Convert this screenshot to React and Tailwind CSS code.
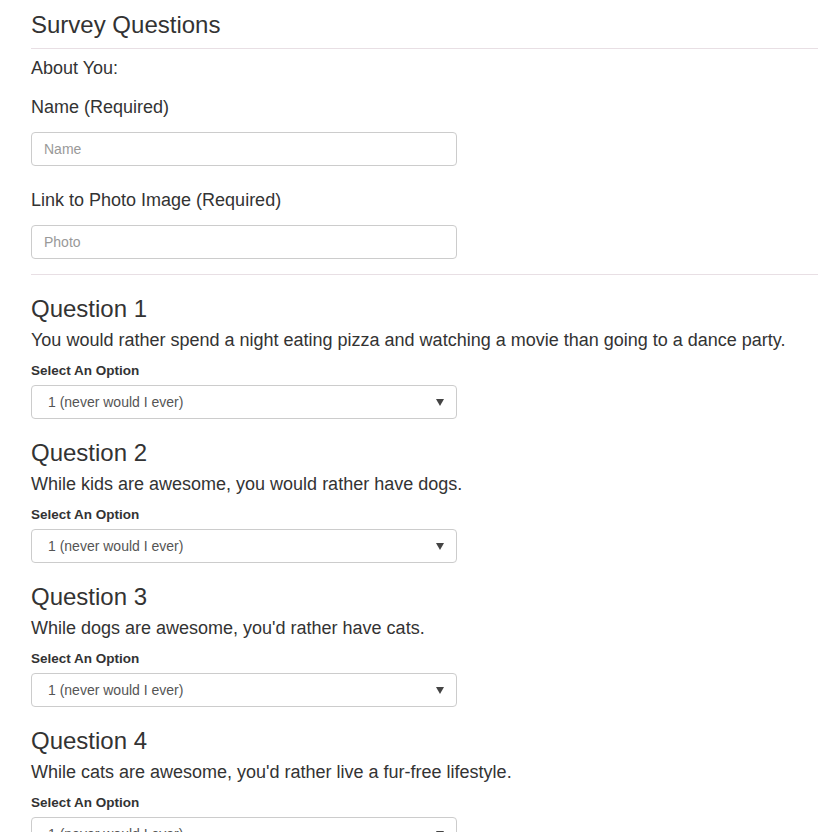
import React from "react";

const questions = [
  "You would rather spend a night eating pizza and watching a movie than going to a dance party.",
  "While kids are awesome, you would rather have dogs.",
  "While dogs are awesome, you'd rather have cats.",
  "While cats are awesome, you'd rather live a fur-free lifestyle.",
  "You would rather go camping than stay in a fancy hotel.",
];

function Select() {
  return (
    <div className="mt-[5px] flex h-[34px] w-[426px] items-center justify-between rounded-[4px] border border-[#ccc] bg-white pl-[16px] pr-[12px]">
      <span className="text-[14px] leading-[20px] text-[#555]">1 (never would I ever)</span>
      <svg width="8" height="7" viewBox="0 0 8 7">
        <path d="M0 0 H8 L4 7 Z" fill="#444" />
      </svg>
    </div>
  );
}

export default function App() {
  return (
    <div
      className="min-h-[832px] w-[818px] overflow-hidden bg-white pl-[31px] text-[#333]"
      style={{ fontFamily: '"Liberation Sans", Arial, sans-serif' }}
    >
      <div className="pt-[12px] text-[24px] leading-[26px]">Survey Questions</div>
      <div className="mt-[10px] h-px w-full bg-[#e8dfe4]" />
      <div className="mt-[6px] text-[18px] leading-[26px]">About You:</div>
      <div className="mt-[13px] text-[18px] leading-[26px]">Name (Required)</div>
      <div className="mt-[12px] flex h-[34px] w-[426px] items-center rounded-[4px] border border-[#ccc] bg-white px-[12px]">
        <span className="text-[14px] text-[#999]">Name</span>
      </div>
      <div className="mt-[21px] text-[18px] leading-[26px]">Link to Photo Image (Required)</div>
      <div className="mt-[12px] flex h-[34px] w-[426px] items-center rounded-[4px] border border-[#ccc] bg-white px-[12px]">
        <span className="text-[14px] text-[#999]">Photo</span>
      </div>
      <div className="mt-[15px] h-px w-full bg-[#e8dfe4]" />
      <div className="pt-[21px]">
        {questions.map((q, i) => (
          <div key={i} className="mb-[21px]">
            <div className="text-[24px] leading-[26px]">Question {i + 1}</div>
            <div className="mt-[5px] whitespace-nowrap text-[18px] leading-[26px]">{q}</div>
            <div className="mt-[9px] text-[13.5px] font-bold leading-[18px]">Select An Option</div>
            <Select />
          </div>
        ))}
      </div>
    </div>
  );
}
